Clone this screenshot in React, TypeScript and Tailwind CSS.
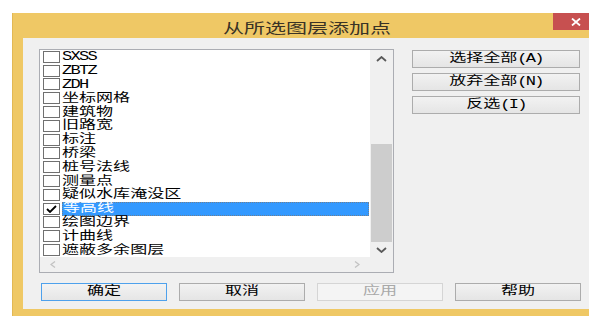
import React from 'react';

type Layer = { name: string; checked?: boolean; selected?: boolean };

const layers: Layer[] = [
  { name: 'SXSS' },
  { name: 'ZBTZ' },
  { name: 'ZDH' },
  { name: '坐标网格' },
  { name: '建筑物' },
  { name: '旧路宽' },
  { name: '标注' },
  { name: '桥梁' },
  { name: '桩号法线' },
  { name: '测量点' },
  { name: '疑似水库淹没区' },
  { name: '等高线', checked: true, selected: true },
  { name: '绘图边界' },
  { name: '计曲线' },
  { name: '遮蔽多余图层' },
];

const font = "font-['SimSun','Liberation_Mono','Noto_Sans_CJK_SC',monospace]";

function Chevron({ up }: { up?: boolean }) {
  return (
    <svg width="11" height="6" viewBox="0 0 11 6">
      <polyline
        points={up ? '1,5 5.5,1 10,5' : '1,1 5.5,5 10,1'}
        fill="none"
        stroke="#5a5a5a"
        strokeWidth="1.8"
      />
    </svg>
  );
}

function Label({ text }: { text: string }) {
  const latin = /^[A-Z]+$/.test(text);
  return (
    <span
      className={`inline-block origin-left scale-x-[1.42] whitespace-nowrap text-[12px] leading-none ${
        latin ? "font-['Liberation_Mono',monospace] tracking-[-1.2px]" : ''
      }`}
    >
      {text}
    </span>
  );
}

function Row({ layer }: { layer: Layer }) {
  return (
    <div className="flex h-[13.8px] items-center pl-[3px]">
      <div className="flex h-[12px] w-[17px] shrink-0 items-center justify-center border border-[#707070] bg-white">
        {layer.checked && (
          <svg width="11" height="8" viewBox="0 0 11 8">
            <polyline points="1,4 4,7 10,1" fill="none" stroke="#000" strokeWidth="1.8" />
          </svg>
        )}
      </div>
      <div
        className={`ml-[2px] mr-[1px] flex h-full flex-1 items-center pt-[1px] ${
          layer.selected ? 'border border-dotted border-[#6f7f90] bg-[#3399ff] text-white' : 'text-black'
        }`}
      >
        <Label text={layer.name} />
      </div>
    </div>
  );
}

function Btn({ label, suffix, w, primary, disabled }: { label: string; suffix?: string; w: string; primary?: boolean; disabled?: boolean }) {
  return (
    <div
      className={`flex h-[18px] ${w} items-center justify-center border ${
        disabled
          ? 'border-[#d5d5d5] bg-[#f4f4f4] text-[#a8a8a8]'
          : primary
            ? 'border-[#4ea1ec] bg-gradient-to-b from-[#f3f3f3] to-[#e6e6e6] text-black'
            : 'border-[#acacac] bg-gradient-to-b from-[#f2f2f2] to-[#e5e5e5] text-black'
      }`}
    >
      <span className="inline-block origin-center scale-x-[1.42] whitespace-nowrap text-[12px] leading-none">
        {label}
        {suffix && <span className="font-['Liberation_Mono',monospace] tracking-[-1.2px]">{suffix}</span>}
      </span>
    </div>
  );
}

export default function App() {
  return (
    <div className={`h-[323px] w-[589px] overflow-hidden bg-white pl-[12px] pt-[13px] ${font}`}>
      <div className="flex h-[303px] w-[588px] flex-col border-l border-[#e2b854] bg-[#efc865]">
        <div className="relative flex h-[25px] shrink-0 items-center justify-center pt-[2px]">
          <span className="inline-block origin-center scale-x-[1.5] text-[14px] leading-none text-[#3a3326] font-['Noto_Sans_CJK_SC',sans-serif]">
            从所选图层添加点
          </span>
          <div className="absolute right-[2px] top-0 flex h-[17px] w-[45px] items-center justify-center bg-[#c75050]">
            <svg width="10" height="8" viewBox="0 0 10 8">
              <path d="M1 0.5 L9 7.5 M9 0.5 L1 7.5" stroke="#fff" strokeWidth="1.8" />
            </svg>
          </div>
        </div>

        <div className="mx-[10px] flex h-[271px] flex-col bg-[#f0f0f0]">
          <div className="flex pl-[16px] pt-[11px]">
            <div className="flex h-[224px] w-[355px] flex-col border border-[#abadb3] bg-white">
              <div className="flex h-[207px]">
                <div className="w-[330px] overflow-hidden">
                  {layers.map((l) => (
                    <Row key={l.name} layer={l} />
                  ))}
                </div>
                <div className="flex w-[23px] flex-col bg-[#f0f0f0]">
                  <div className="flex h-[17px] items-center justify-center">
                    <Chevron up />
                  </div>
                  <div className="h-[77px]" />
                  <div className="mx-[1px] h-[98px] bg-[#cdcdcd]" />
                  <div className="flex h-[15px] items-center justify-center">
                    <Chevron />
                  </div>
                </div>
              </div>
              <div className="flex h-[15px] items-center justify-between bg-[#f0f0f0] pl-[10px] pr-[33px]">
                <svg width="6" height="7" viewBox="0 0 6 7">
                  <polyline points="5,0.5 1,3.5 5,6.5" fill="none" stroke="#c2c2c2" strokeWidth="1.3" />
                </svg>
                <svg width="6" height="7" viewBox="0 0 6 7">
                  <polyline points="1,0.5 5,3.5 1,6.5" fill="none" stroke="#c2c2c2" strokeWidth="1.3" />
                </svg>
              </div>
            </div>

            <div className="ml-[18px] mt-[1px] flex flex-col gap-[5px]">
              <Btn label="选择全部" suffix="(A)" w="w-[168px]" />
              <Btn label="放弃全部" suffix="(N)" w="w-[168px]" />
              <Btn label="反选" suffix="(I)" w="w-[168px]" />
            </div>
          </div>

          <div className="flex gap-[12px] pl-[18px] pt-[10px]">
            <Btn label="确定" w="w-[126px]" primary />
            <Btn label="取消" w="w-[126px]" />
            <Btn label="应用" w="w-[126px]" disabled />
            <Btn label="帮助" w="w-[126px]" />
          </div>
        </div>
      </div>
    </div>
  );
}
